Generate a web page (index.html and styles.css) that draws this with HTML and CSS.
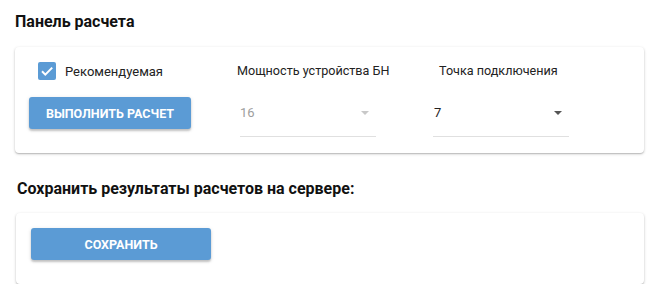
FILE: index.html
```html
<!DOCTYPE html>
<html lang="ru">
<head>
<meta charset="utf-8">
<link rel="stylesheet" href="styles.css">
</head>
<body>
<div class="page">
  <h2 class="title">Панель расчета</h2>
  <div class="card card-calc">
    <div class="col col-check">
      <label class="check">
        <span class="box"><svg viewBox="0 0 18 18" width="18" height="18"><path d="M4 9.3l3.3 3.3L14.2 5.6" fill="none" stroke="#fff" stroke-width="2"/></svg></span>
        <span class="check-label">Рекомендуемая</span>
      </label>
      <button class="btn btn-calc">ВЫПОЛНИТЬ РАСЧЕТ</button>
    </div>
    <div class="col col-select col-power">
      <div class="field-label">Мощность устройства БН</div>
      <div class="select disabled">
        <span class="value">16</span>
        <span class="arrow"></span>
      </div>
    </div>
    <div class="col col-select col-point">
      <div class="field-label">Точка подключения</div>
      <div class="select">
        <span class="value">7</span>
        <span class="arrow"></span>
      </div>
    </div>
  </div>
  <h2 class="title title-save">Сохранить результаты расчетов на сервере:</h2>
  <div class="card card-save">
    <button class="btn btn-save">СОХРАНИТЬ</button>
  </div>
</div>
</body>
</html>
```
FILE: styles.css
```css
html, body {
  margin: 0;
  padding: 0;
  background: #fff;
}
body {
  font-family: Roboto, "Liberation Sans", sans-serif;
  color: #212121;
}
.page {
  padding: 12px 23px 0 15px;
}
.title {
  margin: 0;
  font-size: 16px;
  font-weight: 700;
  line-height: 19px;
  color: #111;
}
.card {
  background: #fff;
  border-radius: 4px;
  box-shadow: 0 1px 3px rgba(0,0,0,0.22), 0 1px 1px rgba(0,0,0,0.12);
}
.card-calc {
  margin-top: 16px;
  height: 106px;
  display: flex;
  box-sizing: border-box;
  padding: 13px 0 0 14px;
}
.col-check {
  width: 208px;
  display: flex;
  flex-direction: column;
}
.check {
  display: flex;
  align-items: center;
  margin-left: 9px;
  height: 20px;
  margin-top: 1px;
}
.box {
  width: 18px;
  height: 18px;
  background: #5b9bd5;
  border-radius: 2px;
  display: block;
}
.box svg { display: block; }
.check-label {
  margin-left: 9px;
  font-size: 13px;
  color: #222;
}
.btn {
  border: none;
  border-radius: 3px;
  background: #5b9bd5;
  color: #fff;
  font-family: Roboto, "Liberation Sans", sans-serif;
  font-weight: 700;
  font-size: 12.5px;
  height: 32px;
  box-shadow: 0 2px 2px rgba(0,0,0,0.18), 0 1px 4px rgba(0,0,0,0.12);
  padding: 0;
}
.btn-calc {
  width: 162px;
  margin-top: 16px;
}
.col-select {
  display: flex;
  flex-direction: column;
}
.col-power { width: 202px; }
.col-power .select { margin-left: 3px; }
.col-point .select { margin-left: -6px; }
.field-label {
  font-size: 12.6px;
  color: #222;
  margin-top: 3px;
}
.select {
  margin-top: 27px;
  width: 136px;
  height: 32px;
  border-bottom: 1px solid #e0e0e0;
  display: flex;
  align-items: flex-start;
  justify-content: space-between;
  box-sizing: border-box;
  padding-right: 7px;
}
.select .value {
  font-size: 13px;
  color: #222;
  line-height: 16px;
}
.col-point .value { margin-left: 1px; }
.select.disabled .value { color: #9e9e9e; }
.arrow {
  width: 0;
  height: 0;
  border-left: 4.5px solid transparent;
  border-right: 4.5px solid transparent;
  border-top: 4.5px solid #555;
  margin-top: 6px;
}
.select.disabled .arrow { border-top-color: #c8c8c8; }
.title-save {
  margin-top: 26px;
  margin-left: 2px;
}
.card-save {
  margin-top: 15px;
  margin-left: 1px;
  height: 71px;
  box-sizing: border-box;
  padding: 15px 0 0 15px;
}
.btn-save {
  width: 180px;
}
```
